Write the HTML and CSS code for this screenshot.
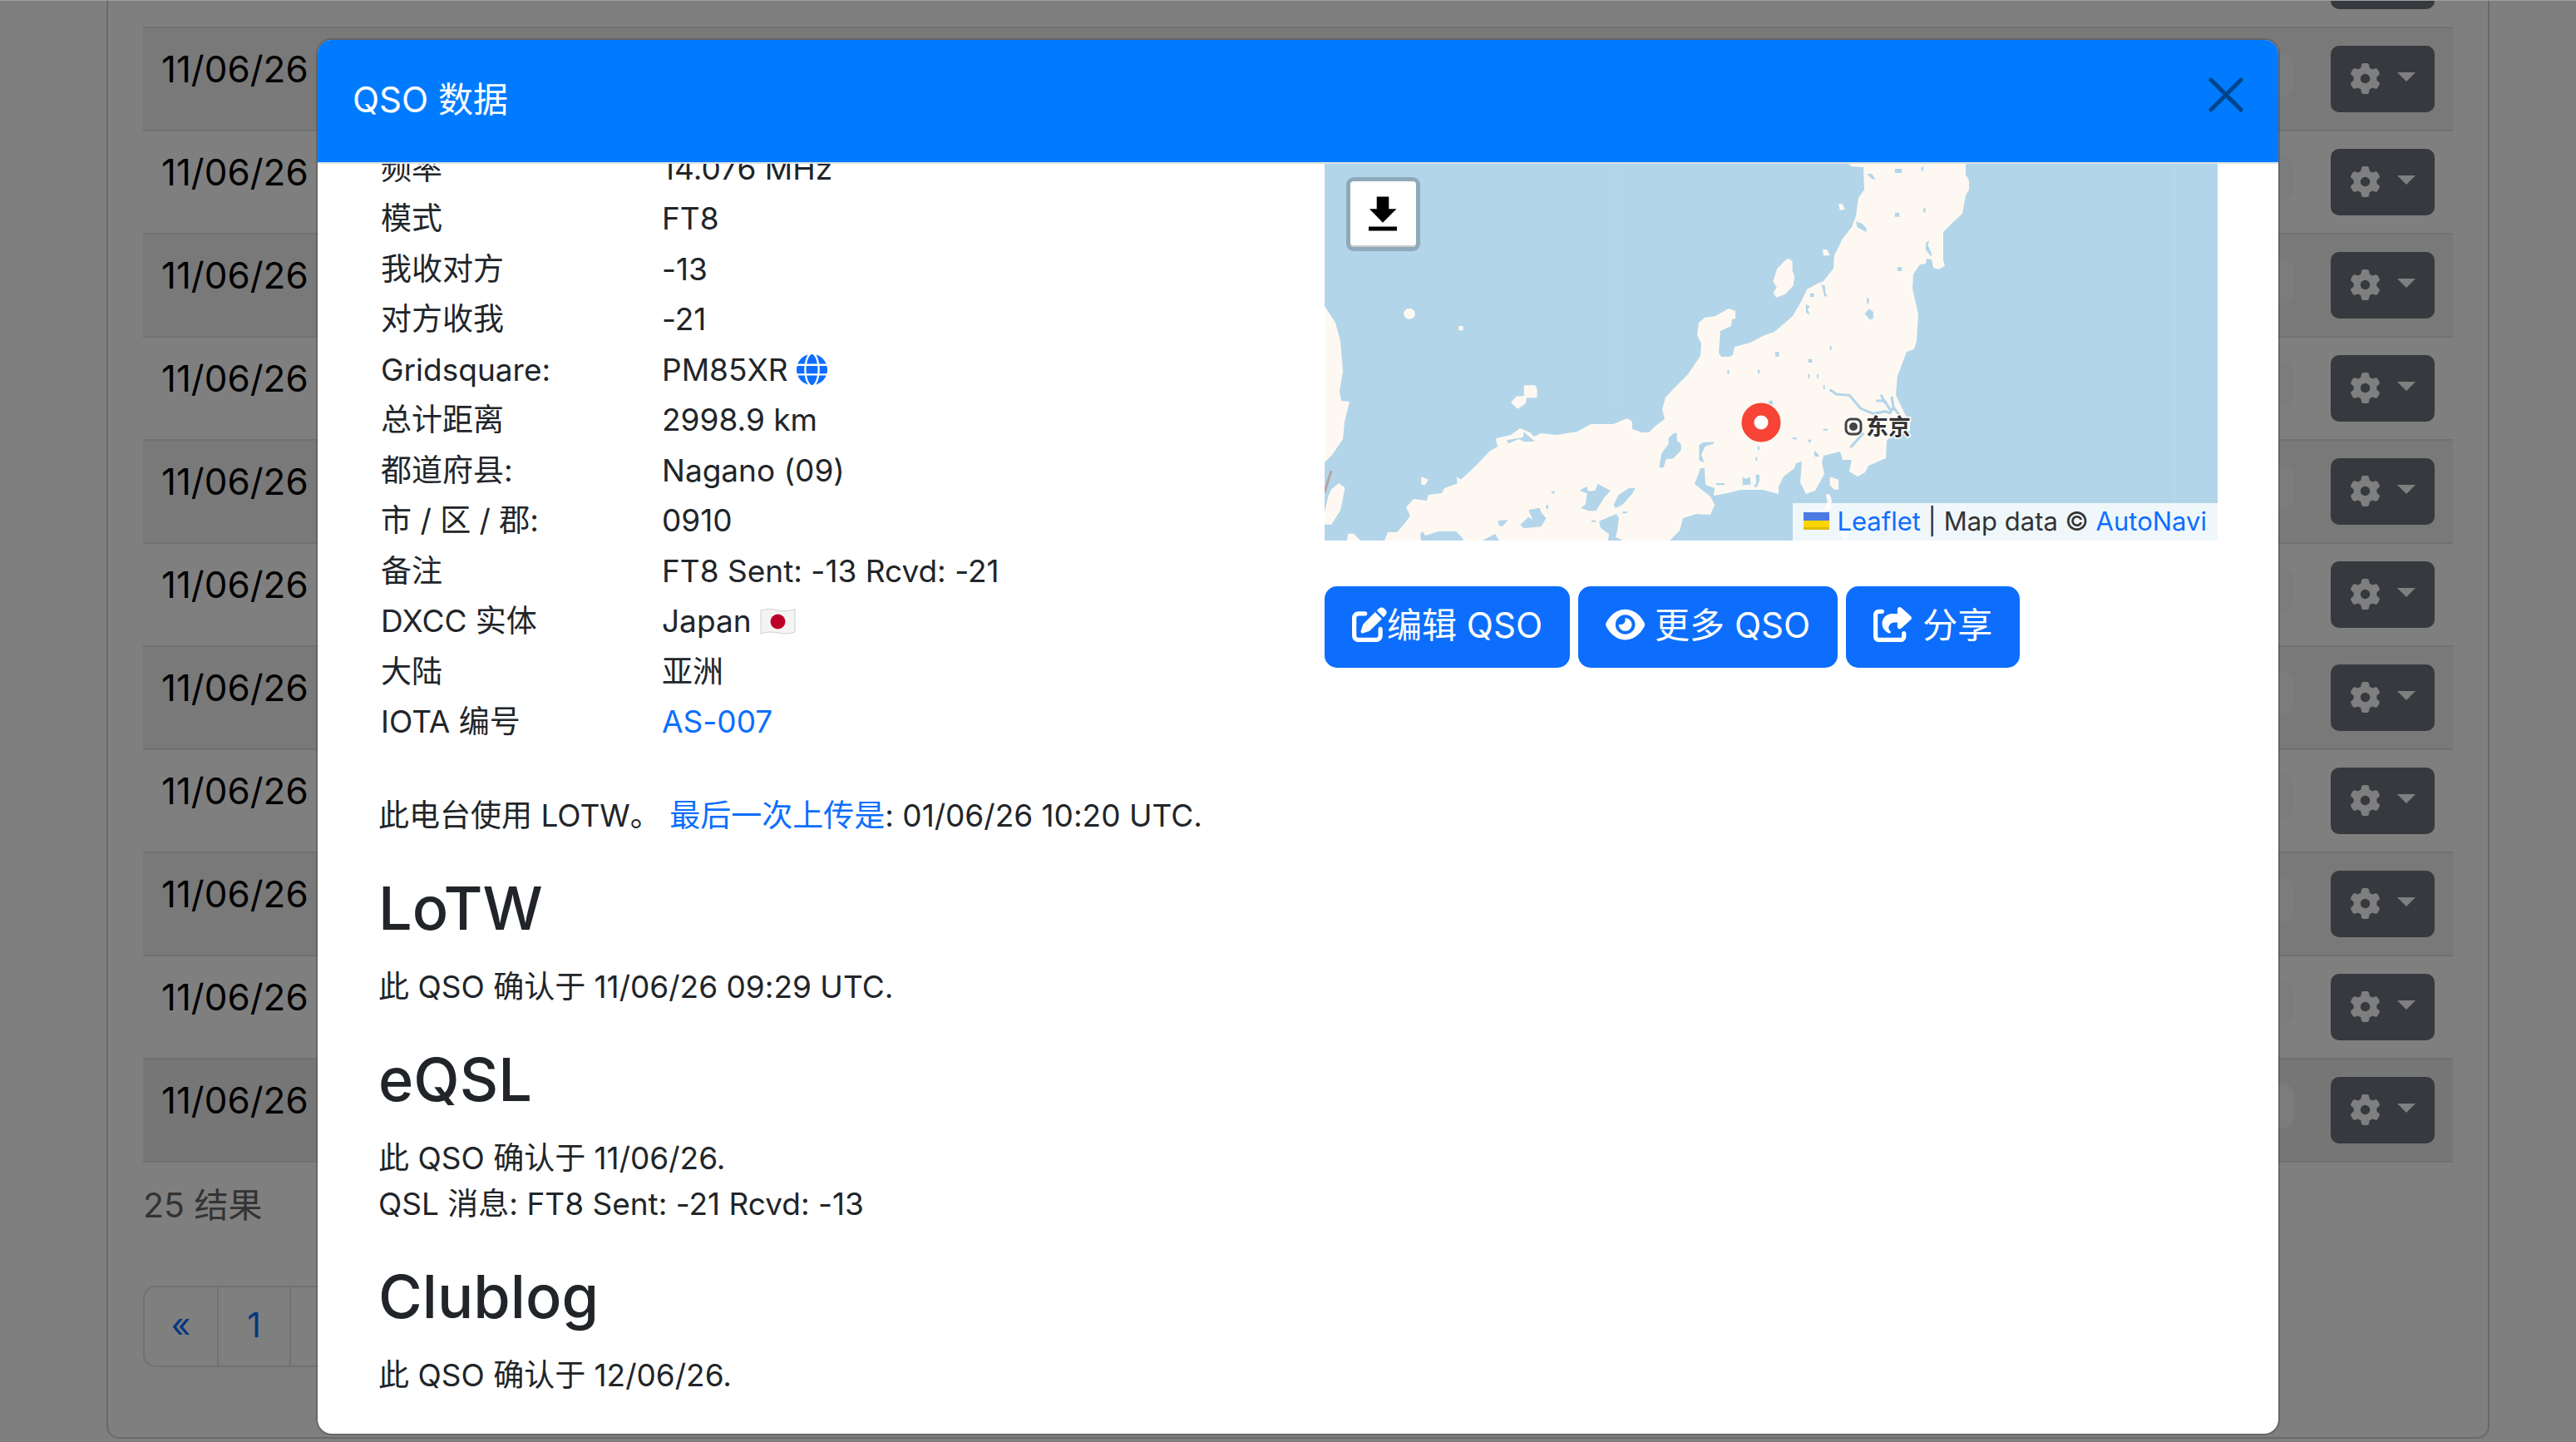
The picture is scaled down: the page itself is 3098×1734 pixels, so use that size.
FILE: index.html
```html
<!DOCTYPE html>
<html lang="zh-CN">
<head>
<meta charset="utf-8">
<title>QSO 数据</title>
<link rel="stylesheet" href="styles.css">
</head>
<body>
<svg class="defs" aria-hidden="true">
  <symbol id="gear" viewBox="0 0 512 512"><path d="M495.9 166.6c3.2 8.7 .5 18.4-6.4 24.6l-43.3 39.4c1.1 8.3 1.7 16.8 1.7 25.4s-.6 17.1-1.7 25.4l43.3 39.4c6.9 6.2 9.6 15.9 6.4 24.6c-4.4 11.9-9.7 23.3-15.8 34.3l-4.7 8.1c-6.6 11-14 21.4-22.1 31.2c-5.9 7.2-15.7 9.6-24.5 6.8l-55.7-17.7c-13.4 10.3-28.2 18.9-44 25.4l-12.5 57.1c-2 9.1-9 16.3-18.2 17.8c-13.8 2.3-28 3.5-42.5 3.5s-28.7-1.2-42.5-3.5c-9.2-1.5-16.2-8.7-18.2-17.8l-12.5-57.1c-15.8-6.5-30.6-15.1-44-25.4L83.1 425.9c-8.8 2.8-18.6 .3-24.5-6.8c-8.1-9.8-15.5-20.2-22.1-31.2l-4.7-8.1c-6.1-11-11.4-22.4-15.8-34.3c-3.2-8.7-.5-18.4 6.4-24.6l43.3-39.4C64.6 273.1 64 264.6 64 256s.6-17.1 1.7-25.4L22.4 191.2c-6.9-6.2-9.6-15.9-6.4-24.6c4.4-11.9 9.7-23.3 15.8-34.3l4.7-8.1c6.6-11 14-21.4 22.1-31.2c5.9-7.2 15.7-9.6 24.5-6.8l55.7 17.7c13.4-10.3 28.2-18.9 44-25.4l12.5-57.1c2-9.1 9-16.3 18.2-17.8C227.3 1.2 241.5 0 256 0s28.700 1.200 42.500 3.500c9.200 1.500 16.200 8.700 18.200 17.800l12.500 57.100c15.800 6.500 30.600 15.100 44 25.400l55.700-17.700c8.800-2.800 18.600-.3 24.500 6.800c8.100 9.800 15.500 20.200 22.100 31.200l4.700 8.100c6.100 11 11.400 22.400 15.800 34.300zM256 336a80 80 0 1 0 0-160 80 80 0 1 0 0 160z"/></symbol>
  <symbol id="globe" viewBox="0 0 512 512"><path d="M352 256c0 22.200-1.200 43.600-3.300 64H163.300c-2.200-20.400-3.300-41.800-3.300-64s1.200-43.600 3.300-64H348.700c2.200 20.400 3.300 41.800 3.300 64zm28.800-64H503.900c5.300 20.500 8.100 41.900 8.100 64s-2.800 43.500-8.100 64H380.800c2.100-20.600 3.200-42 3.200-64s-1.100-43.400-3.200-64zm112.600-32H376.700c-10-63.900-29.800-117.400-55.300-151.600c78.300 20.700 142 77.500 171.900 151.600zm-149.100 0H167.700c6.100-36.400 15.500-68.600 27-94.700c10.500-23.600 22.200-40.700 33.500-51.500C239.400 3.200 248.700 0 256 0s16.600 3.200 27.800 13.800c11.300 10.800 23 27.900 33.500 51.500c11.600 26 20.900 58.200 27 94.700zm-209 0H18.600C48.600 85.900 112.200 29.100 190.600 8.400C165.100 42.600 145.300 96.100 135.300 160zM8.100 192H131.200c-2.100 20.600-3.200 42-3.200 64s1.100 43.400 3.200 64H8.100C2.800 299.500 0 278.100 0 256s2.800-43.500 8.100-64zM194.700 446.600c-11.600-26-20.900-58.200-27-94.600H344.300c-6.100 36.400-15.500 68.600-27 94.600c-10.500 23.600-22.200 40.700-33.500 51.500C272.600 508.800 263.300 512 256 512s-16.600-3.200-27.800-13.800c-11.300-10.800-23-27.900-33.500-51.500zM135.300 352c10 63.900 29.800 117.400 55.300 151.600C112.200 482.900 48.600 426.100 18.600 352H135.300zm358.100 0c-30 74.100-93.600 130.900-171.900 151.600c25.500-34.200 45.200-87.700 55.300-151.600H493.400z"/></symbol>
</svg>

<main class="page">
  <div class="card">
    <table class="log">
      <tbody id="rows"></tbody>
    </table>
    <p class="count">25 结果</p>
    <nav class="pages" aria-label="分页"><a href="#">«</a><a href="#">1</a><a href="#">2</a></nav>
  </div>
</main>

<div class="backdrop">
  <section class="modal" role="dialog" aria-labelledby="title">
    <header class="modal-head">
      <h1 id="title">QSO 数据</h1>
      <button class="close" type="button" aria-label="关闭"><svg viewBox="0 0 42 42"><path d="M3 3L39 39M39 3L3 39"/></svg></button>
    </header>
    <div class="modal-body">
      <div class="columns">
        <table class="details">
          <tr><th scope="row">频率</th><td>14.076 MHz</td></tr>
          <tr><th scope="row">模式</th><td>FT8</td></tr>
          <tr><th scope="row">我收对方</th><td>-13</td></tr>
          <tr><th scope="row">对方收我</th><td>-21</td></tr>
          <tr><th scope="row">Gridsquare:</th><td>PM85XR <a href="#" aria-label="地图"><svg class="globe"><use href="#globe"/></svg></a></td></tr>
          <tr><th scope="row">总计距离</th><td>2998.9 km</td></tr>
          <tr><th scope="row">都道府县:</th><td>Nagano (09)</td></tr>
          <tr><th scope="row">市 / 区 / 郡:</th><td>0910</td></tr>
          <tr><th scope="row">备注</th><td>FT8 Sent: -13 Rcvd: -21</td></tr>
          <tr><th scope="row">DXCC 实体</th><td>Japan <svg class="flag" viewBox="0 0 43 31"><path d="M1 2C12-1 16 1 22 2S34 3 42 0.500V28C34 31 28 30 22 29S10 27 1 30Z" fill="#f4f4f4" stroke="#cfcfcf"/><ellipse cx="21.500" cy="15.500" rx="9" ry="9" fill="#bc0029"/></svg></td></tr>
          <tr><th scope="row">大陆</th><td>亚洲</td></tr>
          <tr><th scope="row">IOTA 编号</th><td><a href="#">AS-007</a></td></tr>
        </table>

        <div class="side">
          <div class="map">
            <svg class="tiles" viewBox="1593 173 1074 477" preserveAspectRatio="xMidYMax slice">
              <rect x="1593" y="173" width="1074" height="477" fill="#b3d5e9"/>
              <g fill="#fdf9f2">
                <path d="M2223 173V197L2227 200L2241 201L2242 228L2235 238L2232 260L2227 273L2216 287L2206 307L2205 323L2193 338L2186 341L2173 348L2166 363L2156 380L2134 399L2120 404L2105 412L2086 417L2084 427L2080 429H2070L2067 424L2069 398L2082 392L2083 384L2087 383V374L2079 371L2063 380L2050 382L2043 388L2041 403L2046 413L2045 428L2030 450L2017 463L2003 478L1999 492L2002 504L1990 513L1983 520H1975L1963 516V507L1957 503L1940 510H1913L1897 519L1872 523L1853 521L1845 525L1840 520L1828 515L1817 523L1800 527L1799 529L1801 537L1791 543L1775 560L1762 572L1751 582L1737 587L1734 593L1718 595L1716 602L1700 600L1691 610L1696 620L1689 630L1680 640H1669L1665 650H1709L1708 642L1711 639L1714 644L1730 639L1751 639L1759 647L1760 650H1783L1798 642L1803 650H1934L1935 642L1925 635L1923 627L1934 622L1944 618L1947 623L1945 638L1943 646L1952 650H2008L2020 638L2024 623L2040 618L2057 619L2062 607L2057 597L2038 582L2045 563H2050L2051 583L2062 587L2061 596L2077 593L2093 589H2120L2139 594L2139 585L2145 573L2158 563L2160 557L2167 555L2165 580L2172 594L2183 590L2194 570L2191 556L2193 548L2213 543L2216 553H2227L2224 567L2234 573L2243 568L2247 560L2268 551L2269 530L2274 525L2297 518L2297 508L2291 498L2280 475L2282 452L2293 423L2302 420L2305 410L2307 378L2300 347L2301 330L2309 318L2316 317L2317 311L2323 312L2325 322L2331 324L2339 320L2337 313V279L2349 267L2360 257L2364 235L2368 228V217L2364 210V173Z"/>
                <path d="M1593 368L1606 388L1612 410L1615 447L1611 470L1613 482L1623 483L1617 507L1615 528L1602 547L1593 556Z"/>
              </g>
              <g transform="translate(1580 180) scale(.357143 .333333)" fill="#fdf9f2">
                <path d="M85 1203L105 1220L90 1300L60 1352H36V1310L50 1245L60 1225ZM115 1385L135 1385L157 1410H112ZM362 1180L385 1190L375 1210L362 1208ZM480 1180L500 1192L485 1205ZM708 850H745L752 862V895H716L714 915L687 935L664 912L682 890L708 888ZM488 636H503V652H488Z"/>
                <ellipse cx="322" cy="592" rx="19" ry="19"/>
              </g>
              <g transform="translate(2120 180) scale(.357143 .333333)" fill="#fdf9f2">
                <path d="M85 392L100 402V438L107 455L103 490L75 522L45 533L35 515L47 497L35 475L48 430L70 405ZM202 360H216L226 382H204ZM255 196H268L277 215L260 219ZM226 1180L255 1190V1226H240L226 1210ZM212 1243H225L232 1262L228 1300H206L218 1270ZM262 1380H285L290 1395L275 1405L262 1392Z"/>
              </g>
              <g transform="translate(1800 180) scale(.333333)" fill="#b3d5e9">
                <path d="M640 1022H650V1050L665 1062V1085L635 1115H612L602 1147H586L595 1095L620 1062V1040ZM745 1056L785 1054L780 1062L752 1070L738 1100L750 1130L730 1120V1065ZM365 1205L410 1230L388 1255L358 1303H330L303 1292L320 1280L326 1240L298 1230L325 1215L330 1232L355 1230ZM478 1220H500L490 1240L455 1280L428 1294L422 1280L440 1245ZM155 1292L162 1310L178 1330L160 1360L98 1366L85 1352L115 1325L130 1335L115 1300ZM195 1238L208 1228V1242ZM178 1282H186V1296H178ZM5 1338L42 1336L20 1360L8 1356ZM36 1048L95 1038L98 1018L125 1042L138 1052L100 1054L80 1044L42 1060ZM887 1180L900 1188L914 1180L917 1208L887 1210ZM935 1172H948V1195L938 1218L926 1214L936 1205ZM792 1203H822V1210H792ZM1005 730H1019V746H1005ZM832 794H839V808H832ZM942 794H949V808H942ZM1202 707H1208V722H1202ZM1124 755H1138V768H1124ZM1123 810H1129V824H1123ZM1155 810H1161V824H1155ZM1178 850H1184V864H1178ZM1115 558L1130 565L1122 575L1130 597L1116 587ZM1131 518H1145V532H1131ZM1172 485L1185 492L1186 515L1194 530L1182 528ZM982 905H996V918H982ZM942 1070H948V1084H942ZM934 1109H940V1123H934ZM1067 1038H1083V1045H1067ZM1122 1046H1137L1128 1060ZM1146 1085L1162 1100V1108L1146 1106ZM1178 1007H1194V1013H1178ZM342 1337H358V1343H342ZM454 1305H470V1312H454Z"/>
              </g>
              <g transform="translate(2120 180) scale(.357143 .333333)" fill="#b3d5e9">
                <path d="M350 87L368 88L379 108L368 106ZM445 69H468V84H445ZM534 62H541V76H534ZM445 227H460V242H445ZM541 211H548V226H541ZM314 258L335 268L350 285L348 297L318 280ZM560 328L556 345L570 378L566 384L548 360L550 335ZM453 424H468V438H453ZM350 535H357V555H350ZM358 574L372 585V610L360 612L343 592Z"/>
                <path d="M226 866L248 882L292 886L330 934L372 952L412 944L428 950L440 930L462 960M295 1074L340 1022M382 906H410L430 940M398 884L412 915M434 890L440 930" fill="none" stroke="#b3d5e9" stroke-width="9"/>
              </g>
              <path d="M1601 566L1593 592" stroke="#b3a5a5" stroke-width="3"/>
              <path d="M1943.500 173V490M2615.500 173V650" stroke="#bcd8ec"/>
              <circle cx="2118" cy="508" r="16" fill="none" stroke="#f84436" stroke-width="15"/>
              <circle cx="2118" cy="508" r="8" fill="#fff"/>
              <rect x="2220" y="504" width="18" height="18" rx="6" fill="#fff" stroke="#444" stroke-width="3"/>
              <circle cx="2229" cy="513" r="5" fill="#444"/>
              <text class="city" x="2244" y="523">东京</text>
            </svg>
            <button class="download" type="button" aria-label="下载"><svg viewBox="0 0 36 42"><path d="M10 0H25V15H34.500L17.500 32L1 15H10ZM0 37H35V42H0Z"/></svg></button>
            <div class="credit"><svg viewBox="0 0 31 21"><path fill="#4c7be1" d="M0 0H31V10H0Z"/><path fill="#ffd500" d="M0 10H31V18H0Z"/><path fill="#e0bc00" d="M0 18H31V21H0Z"/></svg><span><a href="#">Leaflet</a> | Map data © <a href="#">AutoNavi</a></span></div>
          </div>
          <div class="actions">
            <button type="button"><svg viewBox="0 0 512 512"><path d="M471.600 21.700c-21.900-21.900-57.300-21.900-79.200 0L362.300 51.700l97.900 97.900 30.100-30.100c21.900-21.900 21.900-57.300 0-79.200L471.600 21.700zm-299.200 220c-6.100 6.100-10.800 13.600-13.500 21.900l-29.600 88.800c-2.900 8.600-.6 18.100 5.800 24.600s15.900 8.700 24.600 5.800l88.800-29.600c8.200-2.700 15.700-7.400 21.900-13.500L437.700 172.300 339.700 74.300 172.400 241.700zM96 64C43 64 0 107 0 160V416c0 53 43 96 96 96H352c53 0 96-43 96-96V320c0-17.700-14.300-32-32-32s-32 14.300-32 32v96c0 17.700-14.300 32-32 32H96c-17.700 0-32-14.300-32-32V160c0-17.700 14.300-32 32-32h96c17.700 0 32-14.300 32-32s-14.300-32-32-32H96z"/></svg>编辑 QSO</button>
            <button type="button"><svg viewBox="0 0 576 512"><path d="M288 32c-80.800 0-145.500 36.800-192.600 80.600C48.600 156 17.300 208 2.500 243.700c-3.300 7.900-3.300 16.700 0 24.600C17.300 304 48.600 356 95.400 399.400C142.500 443.200 207.200 480 288 480s145.500-36.800 192.600-80.600c46.800-43.500 78.100-95.400 93-131.100c3.300-7.900 3.300-16.700 0-24.600c-14.900-35.700-46.200-87.700-93-131.100C433.500 68.800 368.800 32 288 32zM144 256a144 144 0 1 1 288 0 144 144 0 1 1 -288 0zm144-64c0 35.300-28.700 64-64 64c-7.100 0-13.900-1.200-20.300-3.300c-5.500-1.800-11.900 1.600-11.700 7.400c.3 6.900 1.300 13.800 3.200 20.700c13.700 51.200 66.400 81.600 117.600 67.900s81.600-66.400 67.900-117.600c-11.100-41.500-47.800-69.400-88.600-71.100c-5.800-.2-9.200 6.100-7.400 11.700c2.100 6.400 3.300 13.200 3.300 20.300z"/></svg> 更多 QSO</button>
            <button type="button"><svg viewBox="0 0 576 512"><path d="M352 224H305.500c-45 0-81.500 36.500-81.500 81.500c0 22.300 10.300 34.300 19.200 40.500c6.800 4.700 12.800 12 12.800 20.300c0 9.800-8 17.800-17.800 17.800h-2.500c-2.400 0-4.800-.4-7.100-1.400C210.800 374.800 128 333.400 128 240c0-79.500 64.500-144 144-144h80V34.700C352 15.500 367.500 0 386.700 0c8.600 0 16.800 3.200 23.200 8.900L548.100 133.300c7.600 6.800 11.900 16.500 11.900 26.700s-4.300 19.900-11.900 26.700l-139 125.100c-5.900 5.300-13.500 8.200-21.400 8.200H384c-17.700 0-32-14.300-32-32V224zM80 96c-8.800 0-16 7.200-16 16V432c0 8.800 7.200 16 16 16H400c8.800 0 16-7.200 16-16V384c0-17.700 14.300-32 32-32s32 14.300 32 32v48c0 44.200-35.800 80-80 80H80c-44.200 0-80-35.800-80-80V112C0 67.800 35.800 32 80 32h48c17.700 0 32 14.300 32 32s-14.300 32-32 32H80z"/></svg> 分享</button>
          </div>
        </div>
      </div>

      <p class="lotw-note">此电台使用 LOTW。 <a href="#">最后一次上传是</a>: 01/06/26 10:20 UTC.</p>
      <h2>LoTW</h2>
      <p>此 QSO 确认于 11/06/26 09:29 UTC.</p>
      <h2>eQSL</h2>
      <p>此 QSO 确认于 11/06/26.<br>QSL 消息: FT8 Sent: -21 Rcvd: -13</p>
      <h2>Clublog</h2>
      <p>此 QSO 确认于 12/06/26.</p>
    </div>
  </section>
</div>
<script src="rows.js"></script>
</body>
</html>
```
FILE: rows.js
```js
const dates = Array(12).fill('11/06/26');
document.getElementById('rows').innerHTML = dates.map(d => `
  <tr>
    <td>${d}</td>
    <td class="tag"><span class="badge"></span></td>
    <td class="menu"><button class="gear" type="button" aria-label="操作"><svg><use href="#gear"/></svg><i class="caret"></i></button></td>
  </tr>`).join('');
```
FILE: styles.css
```css
* {
  box-sizing: border-box;
}

body {
  margin: 0;
  height: 100vh;
  overflow: hidden;
  background: #fff;
  color: #212529;
  font: 37px/55px Inter, "Noto Sans CJK SC", sans-serif;
  font-feature-settings: "calt" 0;
}

h1, h2, p {
  margin: 0;
  font-weight: 400;
}

a {
  color: #0d6efd;
  text-decoration: none;
}

button {
  border: 0;
  font: inherit;
}

.defs {
  display: none;
}

/* log table behind the dialog */
.page {
  margin: -90px 104px 0 128px;
}

.card {
  border: 2px solid #d2d2d2;
  border-top: 0;
  border-radius: 0 0 15px 15px;
  padding: 0 42px 84px;
}

.log {
  width: 100%;
  border-spacing: 0;
  color: #000;
  font-size: 44px;
  font-kerning: none;
  line-height: 56px;
}

.log td {
  padding: 21px 22px;
  border-bottom: 2px solid #dee2e6;
  vertical-align: top;
}

.log tr:nth-child(even) td {
  background: #f2f2f2;
}

.log tr:last-child td {
  background: #ececec;
}

.log .tag {
  padding-top: 29px;
  text-align: right;
}

.badge {
  display: inline-block;
  width: 120px;
  height: 54px;
  border-radius: 15px;
  background: #f8f9fa;
  vertical-align: top;
}

.log .menu {
  width: 1px;
}

.gear {
  display: flex;
  align-items: center;
  gap: 20px;
  height: 80px;
  padding: 0 23px 2px;
  border-radius: 10px;
  background: #6c757d;
}

.gear svg {
  width: 37px;
  height: 37px;
  fill: #fff;
}

.caret {
  border: 11px solid transparent;
  border-top-color: #fff;
  border-bottom: 0;
  margin-bottom: 3px;
}

.count {
  margin: 21px 0 67px;
  color: #666;
  font-size: 41px;
  line-height: 60px;
}

.pages {
  display: inline-flex;
  vertical-align: top;
  border: 2px solid #dee2e6;
  border-radius: 15px;
  font-size: 41px;
}

.pages a {
  width: 87px;
  padding-bottom: 4px;
  line-height: 90px;
  text-align: center;
}

.pages a + a {
  border-left: 2px solid #dee2e6;
}

/* dialog */
.backdrop {
  position: absolute;
  inset: 0;
  padding: 45px 356px 0 380px;
  border-top: 1px solid #a0a0a0;
  background: rgba(0, 0, 0, .5);
}

.modal {
  overflow: hidden;
  border: 2px solid rgba(0, 0, 0, .175);
  border-radius: 19px;
  background: #fff;
  background-clip: padding-box;
}

.modal-head {
  display: flex;
  align-items: center;
  justify-content: space-between;
  height: 149px;
  padding: 0 42px 2px;
  border-bottom: 2px solid #dee2e6;
  background: #007bff;
  color: #fff;
}

.modal-head h1 {
  padding-bottom: 3px;
  font-size: 42px;
}

.close {
  display: flex;
  padding: 0 0 14px;
  background: none;
}

.close svg {
  width: 42px;
  height: 42px;
  fill: none;
  stroke: #00458c;
  stroke-width: 5;
  stroke-linecap: round;
}

.modal-body {
  overflow: hidden;
  padding: 0 73px 43px;
}

/* the body is scrolled part of the way into its first row */
.columns {
  display: grid;
  grid-template-columns: 1fr 1fr;
  gap: 64px;
  align-items: start;
  margin-top: -24px;
}

.details {
  width: 100%;
  border-spacing: 0;
  line-height: 56px;
}

.details tr {
  height: 60px;
}

.details tr:nth-child(even) {
  height: 61px;
}

.details th,
.details td {
  padding: 0 3px 1px;
  font-weight: 400;
  text-align: left;
}

.details th {
  width: 338px;
}

.globe {
  width: 37px;
  height: 37px;
  fill: #0d6efd;
  vertical-align: -5px;
}

.flag {
  width: 43px;
  height: 31px;
  vertical-align: -3px;
}

.map {
  position: relative;
  height: 477px;
}

.tiles {
  display: block;
  width: 100%;
  height: 100%;
}

.city {
  fill: #333;
  stroke: #fff;
  stroke-width: 3px;
  paint-order: stroke;
  font-size: 27px;
  font-weight: 700;
}

.download {
  position: absolute;
  top: 40px;
  left: 26px;
  display: flex;
  width: 89px;
  height: 89px;
  padding: 18px 22px;
  border: 5px solid rgba(0, 0, 0, .2);
  border-radius: 9px;
  background: #fff;
  background-clip: padding-box;
  box-shadow: inset 0 -2px #ccc;
}

.download svg {
  width: 36px;
  height: 42px;
}

.credit {
  position: absolute;
  right: 0;
  bottom: 0;
  display: flex;
  align-items: center;
  gap: 9px;
  padding: 0 13px 2px;
  background: rgba(255, 255, 255, .8);
  color: #333;
  font-size: 31px;
  line-height: 43px;
}

.credit svg {
  width: 31px;
  height: 21px;
}

.actions {
  display: flex;
  gap: 10px;
  margin-top: 55px;
}

.actions button {
  height: 98px;
  padding: 0 33px 5px;
  border-radius: 15px;
  background: #0d6efd;
  color: #fff;
  font-size: 42px;
  white-space: pre;
}

.actions svg {
  height: 42px;
  fill: #fff;
  vertical-align: -5px;
}

.modal-body h2 {
  margin: 40px 0 23px;
  font-size: 72px;
  font-weight: 500;
  line-height: 88px;
}

.lotw-note {
  margin-top: 54px;
}
```
